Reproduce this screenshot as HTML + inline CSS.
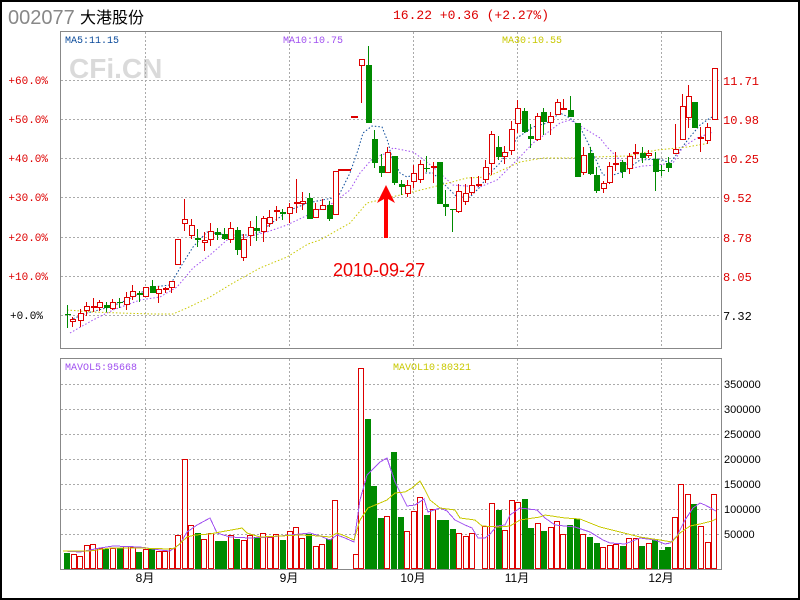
<!DOCTYPE html>
<html><head><meta charset="utf-8"><style>
html,body{margin:0;padding:0;background:#fff}
#w{position:relative;width:796px;height:596px;border:2px solid #000;overflow:hidden;font-family:"Liberation Mono","DejaVu Sans Mono",monospace}
svg{position:absolute;left:-2px;top:-2px}
#cd,#vol,#grid{shape-rendering:crispEdges}
</style></head><body><div id="w">
<svg id="s" width="800" height="600" viewBox="0 0 800 600" xmlns="http://www.w3.org/2000/svg">
<text x="8" y="24" font-family="Liberation Sans, sans-serif" font-size="20" fill="#888">002077</text>
<text x="80" y="23" font-family="Liberation Sans, 'Noto Sans CJK SC', sans-serif" font-size="16" fill="#000">大港股份</text>
<text x="393" y="19" font-family="Liberation Mono, monospace" font-size="13" fill="#d00">16.22 +0.36 (+2.27%)</text>
<text x="69" y="78" font-family="Liberation Sans, sans-serif" font-weight="bold" font-size="28" fill="#dadada">CFi.CN</text>
<g id="grid"></g>
<rect x="60.5" y="31.5" width="661" height="317" fill="none" stroke="#888"/>
<rect x="60.5" y="358.5" width="661" height="211" fill="none" stroke="#888"/>
<g font-family="Liberation Mono, monospace" font-size="10">
<text x="65" y="43" fill="#0a4a9a">MA5:11.15</text>
<text x="283" y="43" fill="#a050f0">MA10:10.75</text>
<text x="502" y="43" fill="#c8c800">MA30:10.55</text>
<text x="65" y="370" fill="#a050f0">MAVOL5:95668</text>
<text x="393" y="370" fill="#c8c800">MAVOL10:80321</text>
</g>
<g font-family="Liberation Mono, monospace" font-size="11" fill="#d00" text-anchor="end">
<text x="48" y="84">+60.0%</text><text x="48" y="123">+50.0%</text><text x="48" y="162">+40.0%</text>
<text x="48" y="201">+30.0%</text><text x="48" y="241">+20.0%</text><text x="48" y="280">+10.0%</text>
<text x="43" y="319" fill="#000">+0.0%</text>
</g>
<g font-family="Liberation Mono, monospace" font-size="12" fill="#d00">
<text x="723" y="85">11.71</text><text x="723" y="124">10.98</text><text x="723" y="163">10.25</text>
<text x="723" y="202">9.52</text><text x="723" y="242">8.78</text><text x="723" y="281">8.05</text>
<text x="723" y="320" fill="#000">7.32</text>
</g>
<g font-family="Liberation Sans, sans-serif" font-size="11" fill="#000">
<text x="724" y="388">350000</text><text x="724" y="413">300000</text><text x="724" y="438">250000</text>
<text x="724" y="463">200000</text><text x="724" y="488">150000</text><text x="724" y="513">100000</text>
<text x="724" y="538">50000</text>
</g>
<g font-family="Liberation Sans, 'Noto Sans CJK SC', sans-serif" font-size="12" fill="#000" text-anchor="middle">
<text x="145" y="582">8月</text><text x="289" y="582">9月</text><text x="413" y="582">10月</text>
<text x="517" y="582">11月</text><text x="661" y="582">12月</text>
</g>
<g id="ma"></g>
<g id="cd"></g>
<g id="vol"></g>
<text x="333" y="276" font-family="Liberation Sans, sans-serif" font-size="18" fill="#e00">2010-09-27</text>
<polygon points="386,185 377,203 384,199 384,238 388,238 388,199 395,203" fill="#f00"/>
</svg>
<script>
var NS="http://www.w3.org/2000/svg";
function el(p,t,a){var e=document.createElementNS(NS,t);for(var k in a)e.setAttribute(k,a[k]);document.getElementById(p).appendChild(e);return e;}
var gy=[80,119,158,197,237,276,315],vy=[384,409,434,459,484,509,534],gx=[145,289,413,517,661];
gy.forEach(function(y){el("grid","line",{x1:61,x2:721,y1:y+.5,y2:y+.5,stroke:"#aaa","stroke-dasharray":"2 2"})});
vy.forEach(function(y){el("grid","line",{x1:61,x2:721,y1:y+.5,y2:y+.5,stroke:"#aaa","stroke-dasharray":"2 2"})});
gx.forEach(function(x){el("grid","line",{x1:x+.5,x2:x+.5,y1:32,y2:348,stroke:"#aaa","stroke-dasharray":"2 2"});el("grid","line",{x1:x+.5,x2:x+.5,y1:359,y2:569,stroke:"#aaa","stroke-dasharray":"2 2"})});
function pl(g,pts,col,dash){var a={points:pts.map(function(p){return p.join(",")}).join(" "),fill:"none",stroke:col,"stroke-width":1};if(dash)a["stroke-dasharray"]=dash;el(g,"polyline",a);}
pl("ma",[[70,320],[87,313],[110,307],[127,300],[140,293],[153,287],[170,285],[173,280],[183,263],[193,247],[207,232],[227,235],[247,235],[260,232],[273,222],[290,210],[308,203],[322,200],[338,197],[350,173],[358,150],[363,133],[372,126],[382,127],[388,142],[392,158],[400,173],[407,177],[420,173],[433,173],[440,180],[450,190],[457,197],[470,197],[480,187],[490,173],[500,163],[510,150],[517,138],[533,127],[547,123],[560,113],[570,118],[580,127],[590,147],[603,175],[613,175],[623,172],[640,160],[660,159],[670,163],[680,150],[690,137],[700,125],[710,118],[715,116]],"#0a4a9a","1.5 2");
pl("ma",[[70,333],[93,320],[113,310],[140,300],[160,297],[177,287],[193,268],[210,255],[227,240],[247,237],[267,232],[287,225],[308,215],[333,203],[350,190],[360,173],[373,158],[387,153],[393,148],[413,152],[420,157],[433,167],[453,185],[480,187],[497,180],[510,167],[520,157],[533,143],[547,133],[560,123],[570,120],[587,130],[600,138],[607,147],[620,160],[633,168],[643,166],[657,165],[673,163],[683,147],[697,138],[713,132]],"#a050f0","1.5 2");
pl("ma",[[67,310],[93,312],[120,313],[153,314],[173,314],[187,308],[210,297],[233,283],[260,268],[287,257],[308,244],[320,240],[350,223],[367,203],[400,195],[433,187],[467,178],[487,177],[520,162],[543,158],[570,158],[593,157],[627,156],[657,150],[687,147],[710,143]],"#c8c800","1.5 2");
var C=[[67,314,315,305,328,'g'],[72,319,321,317,327,'r'],[80,313,320,309,327,'r'],[86,306,310,302,316,'r'],[93,306,307,298,312,'r'],[99,302,307,300,311,'r'],[106,305,308,302,312,'g'],[112,302,308,299,310,'r'],[119,302,303,298,308,'g'],[126,297,304,292,310,'r'],[132,291,296,285,300,'r'],[139,293,295,291,302,'g'],[145,287,296,287,297,'r'],[152,286,293,280,293,'g'],[158,289,293,286,303,'r'],[165,288,289,287,293,'r'],[171,281,287,281,293,'r'],[177,239,264,239,264,'r'],[184,219,223,199,231,'r'],[191,225,235,219,239,'r'],[197,238,240,229,247,'g'],[204,240,242,232,251,'r'],[210,231,239,223,246,'r'],[217,232,235,228,240,'g'],[224,234,239,228,240,'g'],[230,228,239,222,243,'r'],[237,230,250,227,255,'g'],[243,239,257,234,261,'r'],[250,227,235,221,246,'r'],[256,228,231,216,241,'g'],[263,218,231,216,242,'r'],[269,217,223,210,227,'r'],[276,210,211,206,221,'r'],[282,212,214,209,220,'g'],[289,207,213,203,223,'r'],[296,202,203,179,213,'r'],[302,201,203,192,210,'r'],[309,198,219,193,219,'g'],[315,209,217,203,217,'r'],[322,205,209,199,209,'r'],[329,205,219,201,221,'g'],[335,171,214,171,214,'r'],[361,59,65,59,103,'r'],[368,65,123,46,123,'g'],[374,139,163,130,168,'g'],[381,166,173,154,177,'g'],[387,152,172,147,173,'r'],[394,156,183,156,185,'g'],[401,184,187,180,195,'g'],[407,185,193,180,197,'r'],[413,173,181,165,188,'r'],[420,164,179,160,183,'r'],[426,168,169,156,172,'g'],[433,166,167,162,183,'r'],[439,162,204,162,204,'g'],[445,204,207,190,216,'g'],[452,209,210,209,232,'g'],[458,191,211,184,213,'r'],[465,193,201,184,205,'r'],[471,185,192,177,195,'r'],[478,184,185,176,187,'r'],[485,167,179,160,183,'r'],[491,134,163,131,175,'r'],[498,147,157,136,160,'g'],[504,152,156,146,164,'r'],[511,129,150,121,155,'r'],[517,108,123,100,133,'r'],[524,111,132,108,133,'g'],[530,136,139,124,148,'g'],[537,116,139,113,141,'r'],[543,112,122,108,135,'g'],[550,116,122,112,135,'r'],[557,102,114,99,115,'r'],[563,108,109,99,110,'r'],[570,110,117,96,117,'g'],[577,123,177,123,177,'g'],[583,155,172,147,175,'r'],[590,153,174,147,175,'g'],[596,175,191,167,193,'g'],[603,183,188,181,193,'r'],[609,166,182,162,184,'r'],[615,163,164,152,171,'r'],[622,162,172,160,178,'g'],[629,156,168,153,174,'r'],[635,152,153,144,159,'r'],[642,153,158,147,163,'g'],[648,153,155,150,158,'r'],[655,159,172,152,191,'g'],[661,170,171,165,176,'g'],[668,163,168,157,172,'g'],[675,149,153,124,153,'r'],[682,106,139,94,140,'r'],[688,96,117,85,128,'r'],[694,102,128,102,128,'g'],[700,137,138,127,152,'r'],[707,127,140,123,144,'r'],[714,68,119,68,119,'r']];
C.forEach(function(c){var x=c[0],t=c[1],b=c[2],h=c[3],l=c[4];
 if(c[5]=='g'){el("cd","line",{x1:x+.5,x2:x+.5,y1:h,y2:l,stroke:"#008a00"});el("cd","rect",{x:x-2,y:t,width:6,height:Math.max(1,b-t),fill:"#008a00"});}
 else{el("cd","line",{x1:x+.5,x2:x+.5,y1:h,y2:t,stroke:"#d00"});el("cd","line",{x1:x+.5,x2:x+.5,y1:b,y2:l,stroke:"#d00"});
  if(b-t<2)el("cd","rect",{x:x-2,y:t,width:6,height:2,fill:"#d00"});else el("cd","rect",{x:x-1.5,y:t+.5,width:5,height:b-t,fill:"#fff",stroke:"#d00"});}
});
el("cd","rect",{x:338,y:169,width:13,height:2,fill:"#d00"});
el("cd","rect",{x:351,y:116,width:7,height:2,fill:"#d00"});
var V=[[64,553,'g'],[71,554,'r'],[77,556,'r'],[84,545,'r'],[90,544,'r'],[97,548,'r'],[103,549,'g'],[110,548,'r'],[117,548,'g'],[123,546,'r'],[130,547,'r'],[136,552,'g'],[143,549,'r'],[149,549,'g'],[156,551,'r'],[162,551,'r'],[169,548,'r'],[175,535,'r'],[182,459,'r'],[188,525,'r'],[195,533,'g'],[201,539,'r'],[208,533,'r'],[215,541,'g'],[221,541,'g'],[228,535,'r'],[234,539,'g'],[241,540,'r'],[247,535,'r'],[254,537,'g'],[260,533,'r'],[267,537,'r'],[273,534,'r'],[280,540,'g'],[287,531,'r'],[293,527,'r'],[299,538,'r'],[306,534,'g'],[313,546,'r'],[319,544,'r'],[326,539,'g'],[332,500,'r'],[353,554,'r'],[358,368,'r'],[365,419,'g'],[371,486,'g'],[378,518,'g'],[384,516,'r'],[391,452,'g'],[398,517,'g'],[404,531,'r'],[411,511,'r'],[417,497,'r'],[424,515,'g'],[430,509,'r'],[437,520,'g'],[443,520,'g'],[450,529,'g'],[456,533,'r'],[463,536,'r'],[469,533,'r'],[482,526,'r'],[489,503,'r'],[496,510,'g'],[502,530,'r'],[509,500,'r'],[515,502,'r'],[522,499,'g'],[528,528,'g'],[535,523,'r'],[541,531,'g'],[548,527,'r'],[554,521,'r'],[560,534,'r'],[567,525,'g'],[574,519,'g'],[580,534,'r'],[587,537,'g'],[594,543,'g'],[600,547,'r'],[607,545,'r'],[613,544,'r'],[620,546,'g'],[626,538,'r'],[633,538,'r'],[639,546,'g'],[646,543,'r'],[652,539,'g'],[659,550,'g'],[665,547,'g'],[672,517,'r'],[678,484,'r'],[685,494,'r'],[691,504,'g'],[698,526,'r'],[705,542,'r'],[711,494,'r']];
V.forEach(function(v){if(v[2]=='g')el("vol","rect",{x:v[0],y:v[1],width:6,height:569-v[1],fill:"#008a00"});else el("vol","rect",{x:v[0]+.5,y:v[1]+.5,width:5,height:569-v[1]-1,fill:"#fff",stroke:"#d00"});});
pl("vol",[[63,551],[80,552],[100,548],[113,546],[140,547],[160,550],[170,551],[180,544],[187,532],[197,525],[210,518],[217,533],[230,537],[250,538],[270,537],[290,535],[310,533],[320,536],[330,540],[337,535],[345,538],[354,542],[360,500],[367,475],[380,462],[387,458],[395,482],[400,492],[407,506],[415,505],[424,499],[428,512],[440,508],[447,511],[455,520],[465,525],[472,528],[478,538],[485,538],[490,534],[497,526],[505,525],[510,515],[520,508],[537,510],[545,518],[555,525],[575,527],[590,532],[603,540],[610,543],[625,544],[640,538],[655,540],[665,544],[670,543],[677,536],[685,520],[693,508],[700,503],[705,505],[716,511]],"#a050f0");
pl("vol",[[63,551],[90,551],[110,548],[140,548],[170,549],[175,548],[187,537],[195,535],[210,534],[220,532],[237,529],[242,528],[247,533],[260,537],[280,536],[300,535],[320,536],[330,537],[337,533],[345,536],[354,540],[360,520],[368,508],[380,503],[387,500],[395,493],[405,492],[412,488],[420,481],[425,490],[430,500],[440,508],[455,510],[460,518],[475,520],[482,526],[500,527],[510,526],[520,520],[540,517],[545,515],[565,518],[580,519],[600,527],[620,532],[640,537],[660,540],[672,542],[680,533],[690,526],[700,524],[712,521],[716,519]],"#c8c800");
</script>
</div></body></html>
